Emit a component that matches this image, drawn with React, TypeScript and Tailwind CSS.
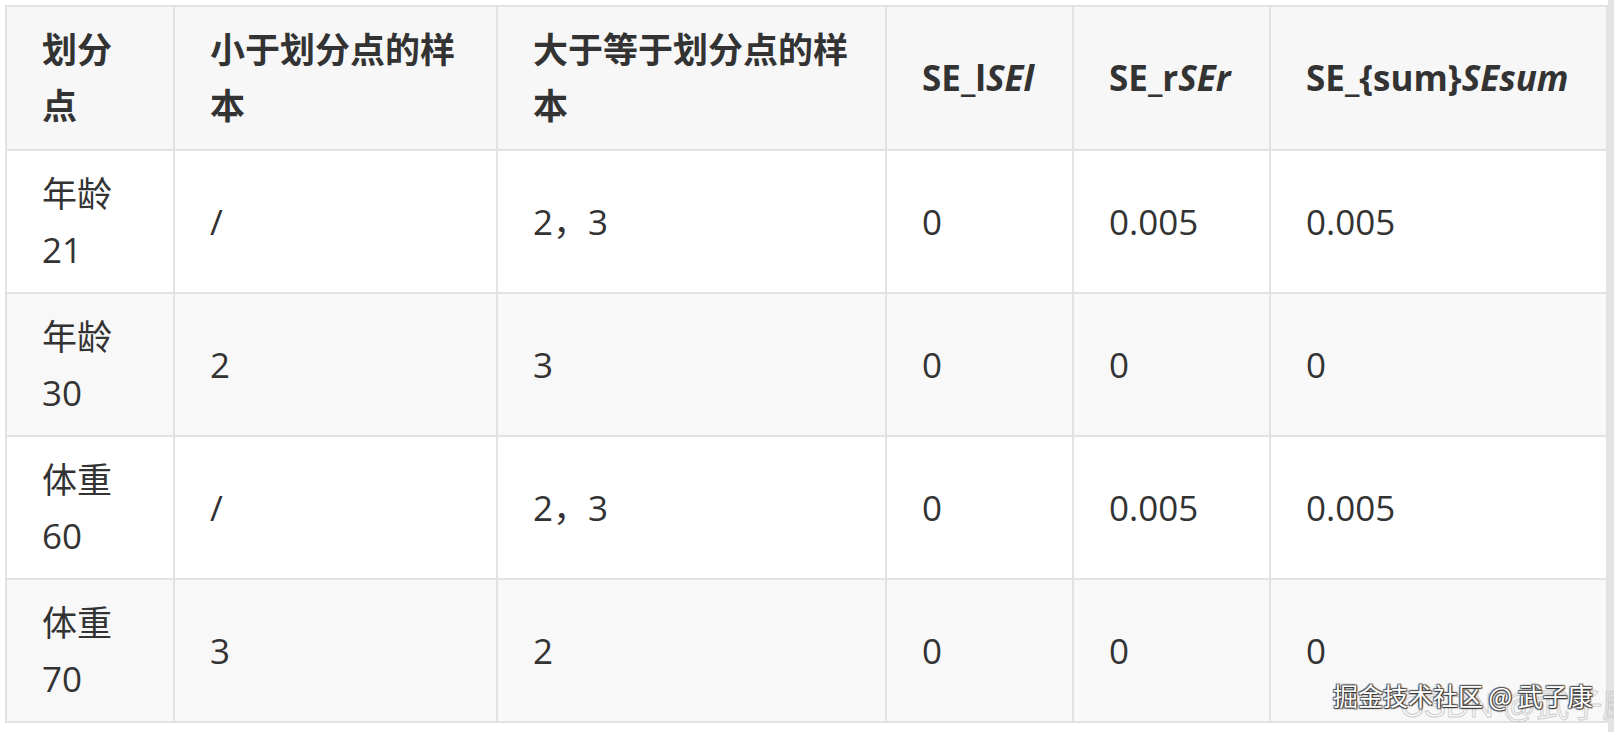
const font = "font-['Open_Sans','Noto_Sans_CJK_SC',sans-serif]"

type Row = { name: string; value: string; left: string; right: string; l: string; r: string; sum: string }

const rows: Row[] = [
  { name: "年龄", value: "21", left: "/", right: "2，3", l: "0", r: "0.005", sum: "0.005" },
  { name: "年龄", value: "30", left: "2", right: "3", l: "0", r: "0", sum: "0" },
  { name: "体重", value: "60", left: "/", right: "2，3", l: "0", r: "0.005", sum: "0.005" },
  { name: "体重", value: "70", left: "3", right: "2", l: "0", r: "0", sum: "0" },
]

const th = "border-2 border-[#e1e2e3] px-[35px] py-[14px] text-left align-middle font-bold"
const td = "border-2 border-[#e1e2e3] px-[35px] py-[14px] text-left align-middle font-normal"

export default function App() {
  return (
    <div className={`relative w-[1614px] h-[732px] bg-white overflow-hidden ${font} text-[35px] leading-[56px] text-[#333333]`}>
      <div className="flex h-full">
        <div className="pl-[5px] pt-[5px]">
          <table className="table-fixed border-collapse w-[1601px]">
            <colgroup>
              <col className="w-[168px]" />
              <col className="w-[323px]" />
              <col className="w-[389px]" />
              <col className="w-[187px]" />
              <col className="w-[197px]" />
              <col className="w-[337px]" />
            </colgroup>
            <thead>
              <tr className="bg-[#f7f7f7] h-[144px]">
                <th className={th}>划分点</th>
                <th className={th}>小于划分点的样本</th>
                <th className={th}>大于等于划分点的样本</th>
                <th className={th}>
                  SE_l<span className="italic">SEl</span>
                </th>
                <th className={th}>
                  SE_r<span className="italic">SEr</span>
                </th>
                <th className={th}>
                  SE_{"{sum}"}
                  <span className="italic">SEsum</span>
                </th>
              </tr>
            </thead>
            <tbody>
              {rows.map((row, i) => (
                <tr key={i} className={`h-[143px] ${i % 2 === 1 ? "bg-[#f8f8f8]" : "bg-white"}`}>
                  <td className={td}>
                    {row.name}
                    <br />
                    {row.value}
                  </td>
                  <td className={td}>{row.left}</td>
                  <td className={td}>{row.right}</td>
                  <td className={td}>{row.l}</td>
                  <td className={td}>{row.r}</td>
                  <td className={td}>{row.sum}</td>
                </tr>
              ))}
            </tbody>
          </table>
        </div>
        <div className="flex-1 bg-[#e3e3e3]" />
      </div>

      {/* watermarks */}
      <div className="absolute left-[1400px] top-[686px] text-[33px] leading-[40px] text-transparent [-webkit-text-stroke:1px_#cfcfcf] font-['Liberation_Sans','Noto_Sans_CJK_SC',sans-serif] whitespace-nowrap">
        CSDN @武子康
      </div>
      <div className="absolute left-[1333px] top-[680px] text-[25px] leading-[30px] text-white font-['Noto_Sans_CJK_SC',sans-serif] whitespace-nowrap [text-shadow:1px_1px_1px_#333,-1px_-1px_1px_#555,1px_-1px_1px_#555,-1px_1px_1px_#555]">
        掘金技术社区 @ 武子康
      </div>
    </div>
  )
}
